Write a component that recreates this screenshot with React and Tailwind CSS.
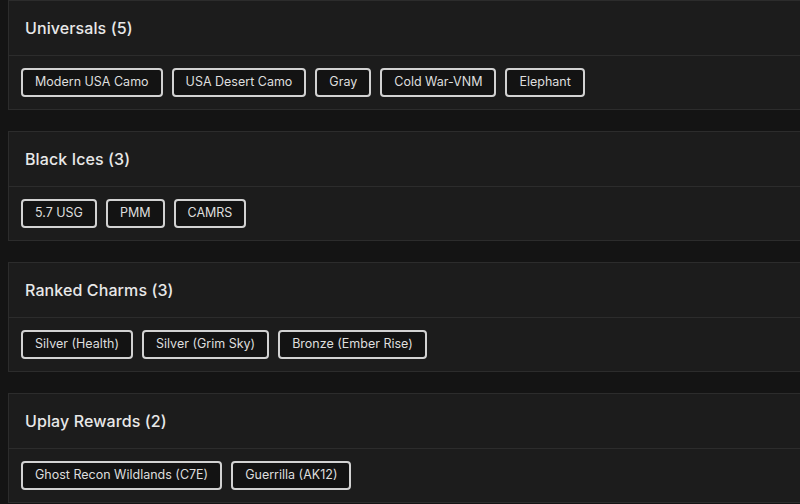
import React from "react";

const sections = [
  { title: "Universals (5)", items: ["Modern USA Camo", "USA Desert Camo", "Gray", "Cold War-VNM", "Elephant"] },
  { title: "Black Ices (3)", items: ["5.7 USG", "PMM", "CAMRS"] },
  { title: "Ranked Charms (3)", items: ["Silver (Health)", "Silver (Grim Sky)", "Bronze (Ember Rise)"] },
  { title: "Uplay Rewards (2)", items: ["Ghost Recon Wildlands (C7E)", "Guerrilla (AK12)"] },
];

export default function App() {
  return (
    <div
      className="w-[800px] h-[504px] overflow-hidden bg-[#141414] pl-2"
      style={{ fontFamily: "Inter, 'Open Sans', sans-serif" }}
    >
      <div className="flex flex-col gap-[21px]">
        {sections.map((s) => (
          <div key={s.title} className="bg-[#1c1c1c] border border-r-0 border-[#2c2c2c] mr-[-2px]">
            <div className="h-[55px] flex items-center px-4 border-b border-[#2c2c2c]">
              <span className="text-[16px] font-medium text-[#e8e8e8] tracking-[0.1px]">{s.title}</span>
            </div>
            <div className="flex items-center gap-[9px] px-3 py-3">
              {s.items.map((it) => (
                <div
                  key={it}
                  className="h-[29px] flex items-center px-3 border-2 border-[#d2d2d2] rounded-[4px] bg-[#131313] text-[12.5px] text-[#dedede]"
                >
                  {it}
                </div>
              ))}
            </div>
          </div>
        ))}
      </div>
    </div>
  );
}
